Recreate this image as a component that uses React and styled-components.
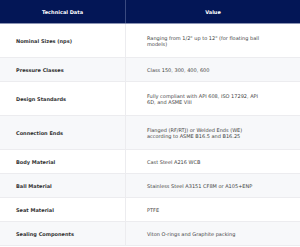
import React from "react";
import styled, { createGlobalStyle } from "styled-components";

const GlobalStyle = createGlobalStyle`
  *, *::before, *::after { box-sizing: border-box; }
  html, body {
    margin: 0;
    padding: 0;
    background: #ffffff;
  }
`;

const Table = styled.div`
  width: 300px;
  font-family: "DejaVu Sans", Verdana, sans-serif;
  font-size: 5px;
  line-height: 6px;
`;

const HeadRow = styled.div`
  display: grid;
  grid-template-columns: 126px 1fr;
  height: 24px;
  background: #031656;
  border-bottom: 1px solid #8a93b3;
`;

const HeadCell = styled.div`
  display: flex;
  align-items: center;
  justify-content: center;
  color: #ffffff;
  font-weight: bold;
  border-right: ${(p) => (p.$divider ? "1px solid #3a4a80" : "none")};
`;

const Row = styled.div`
  display: grid;
  grid-template-columns: 126px 1fr;
  height: ${(p) => (p.$tall ? "34px" : "24px")};
  background: ${(p) => (p.$alt ? "#f7f8fa" : "#ffffff")};
  border-bottom: 1px solid #ececef;
`;

const LabelCell = styled.div`
  display: flex;
  align-items: center;
  padding-left: 16px;
  font-weight: bold;
  color: #333333;
  border-right: 1px solid #ececef;
`;

const ValueCell = styled.div`
  display: flex;
  align-items: center;
  padding: 0 40px 0 21px;
  color: #444444;
`;

const rows = [
  { label: "Nominal Sizes (nps)", value: "Ranging from 1/2\" up to 12\" (for floating ball models)", tall: true },
  { label: "Pressure Classes", value: "Class 150, 300, 400, 600" },
  { label: "Design Standards", value: "Fully compliant with API 608, ISO 17292, API 6D, and ASME VIII", tall: true },
  { label: "Connection Ends", value: "Flanged (RF/RTJ) or Welded Ends (WE) according to ASME B16.5 and B16.25", tall: true },
  { label: "Body Material", value: "Cast Steel A216 WCB" },
  { label: "Ball Material", value: "Stainless Steel A3151 CF8M or A105+ENP" },
  { label: "Seat Material", value: "PTFE" },
  { label: "Sealing Components", value: "Viton O-rings and Graphite packing" },
];

export default function App() {
  return (
    <>
      <GlobalStyle />
      <Table>
        <HeadRow>
          <HeadCell $divider>Technical Data</HeadCell>
          <HeadCell>Value</HeadCell>
        </HeadRow>
        {rows.map((r, i) => (
          <Row key={r.label} $alt={i % 2 === 1} $tall={r.tall}>
            <LabelCell>{r.label}</LabelCell>
            <ValueCell>{r.value}</ValueCell>
          </Row>
        ))}
      </Table>
    </>
  );
}
